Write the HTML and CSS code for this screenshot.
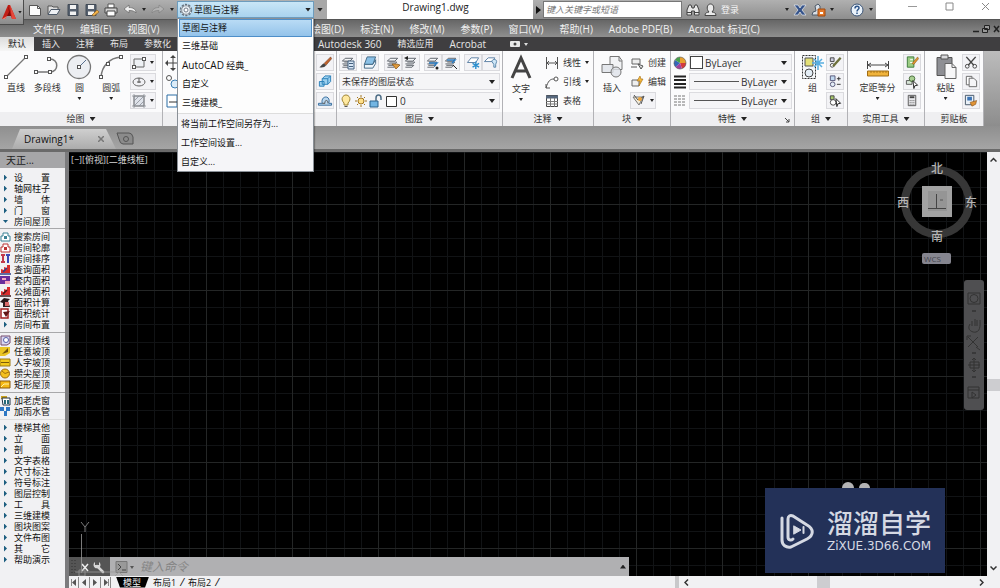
FILE: index.html
```html
<!DOCTYPE html>
<html lang="zh-CN">
<head>
<meta charset="utf-8">
<title>Drawing1.dwg</title>
<link rel="stylesheet" href="styles.css">
</head>
<body>
<svg class="defs" aria-hidden="true">
  <symbol id="minus-square" viewBox="0 0 4 4"><rect x=".5" y=".5" width="3" height="3" fill="#fff" stroke="#555"/></symbol>
  <symbol id="layers" viewBox="0 0 16 16"><path d="M5 3.500h8l-3 3H2zM4 7.500h8l-2 2H2M3 11h8l-2 2H2" fill="#f4f6f8" stroke="#5a5f66"/></symbol>
  <symbol id="undo" viewBox="0 0 14 14"><path d="M1 6l5-4v2.500c4 0 7 1.500 7 5.500-1.500-2-4-2.500-7-2.500V10z" fill="#eee" stroke="#666" stroke-width=".7"/></symbol>
  <symbol id="house" viewBox="0 0 11 11"><path d="M1 10V5h2V2h5v3h2v5z" fill="#fff" stroke="currentColor"/><path d="M4 5h3v3H4z" fill="currentColor"/></symbol>
  <symbol id="chart" viewBox="0 0 11 11"><path d="M1 9V5l3 1V3l3 1V1h3v8z" fill="#d92c2c"/><path d="M0 10h11M3 8l4-4" stroke="currentColor" stroke-width="1.500"/></symbol>
</svg>

<div class="app">
  <header class="titlebar">
    <div class="quick">
      <button class="app-button" aria-label="应用程序">
        <svg width="16" height="16" viewBox="0 0 16 16"><path d="M1 15L7 1h2l6 14h-4l-1-3H6l-2 3z" fill="#c11f17"/><path d="M7 1l3 11H6l2-4z" fill="#7e0c09"/><path d="M9 1l6 14h-4z" fill="#e5483b"/><path d="M1 15l5-3-2 3z" fill="#f37b6d"/></svg>
        <i class="caret"></i>
      </button>
      <button aria-label="新建"><svg width="14" height="14" viewBox="0 0 14 14"><path d="M1.500 2.500h8l3 3v7h-11z" fill="#fbfbfb" stroke="#555"/><path d="M9.500 2.500v3h3" fill="none" stroke="#555"/></svg></button>
      <button aria-label="打开"><svg width="14" height="14" viewBox="0 0 14 14"><path d="M1 11V3h4l1 1h5v2" fill="#ddd" stroke="#555"/><path d="M1 11.500l3-5h9l-3 5z" fill="#eef1f5" stroke="#4d5968"/></svg></button>
      <button aria-label="保存"><svg width="14" height="14" viewBox="0 0 14 14"><path d="M2 1.500h10v11H2z" fill="#56606e" stroke="#414a56"/><path d="M4 2h6v4H4zM4 8.500h6V12H4z" fill="#f2f2f2"/></svg></button>
      <button aria-label="另存为"><svg width="14" height="14" viewBox="0 0 14 14"><path d="M1 1.500h10v11H1z" fill="#56606e" stroke="#414a56"/><path d="M3 2h6v4H3zM3 8.500h6V12H3z" fill="#f2f2f2"/><path d="M7 12l5-5 2 2-5 4z" fill="#f0b14a" stroke="#8b5b1a" stroke-width=".6"/></svg></button>
      <button aria-label="打印"><svg width="14" height="14" viewBox="0 0 14 14"><path d="M4 1h6v4H4z" fill="#fff" stroke="#555"/><path d="M1 5h12v5H1z" fill="#d4d4d4" stroke="#444"/><path d="M3 8h8v5H3z" fill="#fff" stroke="#444"/></svg></button>
      <button aria-label="放弃"><svg width="14" height="14"><use href="#undo"/></svg></button>
      <i class="caret"></i>
      <button class="redo" aria-label="重做"><svg width="14" height="14" viewBox="0 0 14 14"><path d="M13 6L8 2v2.500c-4 0-7 1.500-7 5.500 1.500-2 4-2.500 7-2.500V10z" fill="#bbb" stroke="#777" stroke-width=".7"/></svg></button>
      <i class="caret"></i>
      <div class="workspace">
        <button class="workspace-button" aria-haspopup="listbox" aria-expanded="true">
          <svg width="14" height="14" viewBox="0 0 14 14"><circle cx="7" cy="7" r="5.500" fill="#f8fbfd" stroke="#667380" stroke-width="1.500" stroke-dasharray="2.300 1.150"/><circle cx="7" cy="7" r="4.300" fill="#eef3f7" stroke="#667380" stroke-width=".8"/><circle cx="7" cy="7" r="2" fill="#fff" stroke="#667380" stroke-width=".9"/></svg>
          <span>草图与注释</span><i class="caret big"></i>
        </button>
        <div class="workspace-menu">
          <ul role="listbox" aria-label="工作空间">
            <li role="option" aria-selected="true">草图与注释</li>
            <li role="option">三维基础</li>
            <li role="option"><span class="latin">AutoCAD</span> 经典_</li>
            <li role="option">自定义</li>
            <li role="option">三维建模_</li>
          </ul>
          <ul class="actions">
            <li><button>将当前工作空间另存为...</button></li>
            <li><button>工作空间设置...</button></li>
            <li><button>自定义...</button></li>
          </ul>
        </div>
      </div>
      <button class="quick-more" aria-label="自定义快速访问工具栏"><i class="caret big"></i></button>
    </div>
    <h1>Drawing1.dwg</h1>
    <div class="info">
      <button class="expand" aria-label="折叠"><svg width="5" height="8" viewBox="0 0 5 8"><path d="M0 0l5 4-5 4z" fill="#111"/></svg></button>
      <input type="search" aria-label="搜索" placeholder="键入关键字或短语">
      <button aria-label="查找"><svg width="14" height="14" viewBox="0 0 14 14"><path d="M1 12V7l2-5h2l1 3h2l1-3h2l2 5v5H8.500V8h-3v4z" fill="#e8e8e8" stroke="#444"/><path d="M1 9.500h4.500M8.500 9.500H13" stroke="#444"/></svg></button>
      <button class="login"><svg width="13" height="14" viewBox="0 0 13 14"><path d="M1 12.500c0-3 2-3 4-3.500-3-3-2-8 1.500-8s4.500 5 1.500 8c2 .5 4 .5 4 3.500z" fill="#e9e9e9" stroke="#444"/></svg>登录</button>
      <i class="caret"></i>
      <button aria-label="Exchange"><svg width="14" height="14" viewBox="0 0 14 14"><path d="M1 2h4l2 3 2-3h4l-4 5 4 5H9L7 9l-2 3H1l4-5z" fill="#35538a" stroke="#e6ebf2" stroke-width=".7"/></svg></button>
      <button aria-label="A360"><svg width="15" height="14" viewBox="0 0 15 14"><path d="M1 12l1-3 3-1-1-5 3-2 2 2v9z" fill="#d9dfe6" stroke="#4f5b6a"/><path d="M7 6h7v7H7z" fill="#e5792a" stroke="#9e4a10"/><path d="M9 9h3v2H9z" fill="#fff"/></svg></button>
      <i class="caret"></i>
      <button class="help" aria-label="帮助"><svg width="14" height="14" viewBox="0 0 14 14"><circle cx="7" cy="7" r="6" fill="#eaf2fa" stroke="#3b5578"/><path d="M5 5.500c0-3 4-3 4-.5 0 1.500-2 1.500-2 3.500M7 9.500v1.500" fill="none" stroke="#2d5488" stroke-width="1.500"/></svg></button>
      <i class="caret"></i>
    </div>
    <div class="window-buttons">
      <button aria-label="最小化"><svg width="9" height="9" viewBox="0 0 9 9"><path d="M0 4.500h9" stroke="#999"/></svg></button>
      <button aria-label="最大化"><svg width="9" height="9" viewBox="0 0 9 9"><path d="M1 1h7v7H1z" fill="none" stroke="#888"/></svg></button>
      <button aria-label="关闭"><svg width="9" height="9" viewBox="0 0 9 9"><path d="M1 1l7 7M8 1L1 8" stroke="#888"/></svg></button>
    </div>
  </header>

  <nav class="menubar">
    <div class="menu-group first"><button>文件(F)</button><button>编辑(E)</button><button>视图(V)</button></div>
    <div class="menu-group"><button>绘图(D)</button><button>标注(N)</button><button>修改(M)</button><button>参数(P)</button><button>窗口(W)</button><button>帮助(H)</button><button>Adobe PDF(B)</button><button>Acrobat 标记(C)</button></div>
    <span class="doc-buttons">
      <svg width="28" height="10" viewBox="0 0 28 10"><path d="M1 7.500h6" stroke="#222" stroke-width="1.500"/><path d="M12.500 1.500h5v4h-5zM10.500 4.500h5v4h-5z" fill="#999" stroke="#222"/><path d="M22 2l5 6M27 2l-5 6" stroke="#222" stroke-width="1.500"/></svg>
    </span>
  </nav>

  <nav class="tabs">
    <div class="tab-group first">
      <button class="active">默认</button><button>插入</button><button>注释</button><button>布局</button><button>参数化</button>
    </div>
    <div class="tab-group">
      <button class="latin">Autodesk 360</button><button>精选应用</button><button class="latin">Acrobat</button>
      <button class="collapse" aria-label="最小化功能区"><svg width="18" height="7" viewBox="0 0 18 7"><rect width="10" height="6" rx="1" fill="#e8e8e8"/><circle cx="5" cy="3" r="1.500" fill="#444"/><path d="M14 2h4l-2 3z" fill="#ddd"/></svg></button>
    </div>
  </nav>

  <main class="ribbon">
    <section class="panel">
      <div class="body draw">
        <button class="tool"><svg width="24" height="26" viewBox="0 0 24 26"><path d="M2 23L22 3" stroke="#777" stroke-width="1.300"/><use href="#minus-square" x="0" y="21" width="4" height="4"/><use href="#minus-square" x="20" y="1" width="4" height="4"/></svg>直线</button>
        <button class="tool"><svg width="26" height="26" viewBox="0 0 26 26"><path d="M2 18h14c9 0 9-13 0-13" fill="none" stroke="#777" stroke-width="1.500"/><use href="#minus-square" x="0" y="16" width="4" height="4"/><use href="#minus-square" x="14" y="16" width="4" height="4"/><use href="#minus-square" x="13" y="3" width="4" height="4"/></svg>多段线</button>
        <button class="tool"><svg width="26" height="26" viewBox="0 0 26 26"><circle cx="13" cy="13" r="11.500" fill="#eceef2" stroke="#777" stroke-width="1.300"/><path d="M13 13l7-7" stroke="#58708f"/><use href="#minus-square" x="11" y="11" width="4" height="4"/></svg>圆<i class="caret"></i></button>
        <button class="tool"><svg width="26" height="26" viewBox="0 0 26 26"><path d="M3 23C4 12 11 4 23 3" fill="none" stroke="#777" stroke-width="1.500"/><use href="#minus-square" x="1" y="21" width="4" height="4"/><use href="#minus-square" x="8" y="8" width="4" height="4"/><use href="#minus-square" x="21" y="1" width="4" height="4"/></svg>圆弧<i class="caret"></i></button>
        <div class="stack">
          <button class="split" aria-label="矩形"><svg width="16" height="16" viewBox="0 0 16 16"><path d="M3 4h10v8H3z" fill="#eef1f5" stroke="#666"/><use href="#minus-square" x="1" y="10" width="4" height="4"/><use href="#minus-square" x="11" y="2" width="4" height="4"/></svg><i class="caret"></i></button>
          <button class="split" aria-label="椭圆"><svg width="16" height="16" viewBox="0 0 16 16"><ellipse cx="8" cy="8" rx="6" ry="4" fill="#f0f0f4" stroke="#666"/><path d="M8 4v5M6 8h4" stroke="#555"/></svg><i class="caret"></i></button>
          <button class="split" aria-label="图案填充"><svg width="16" height="16" viewBox="0 0 16 16"><path d="M3 3h10v10H3z" fill="#dfe3ea" stroke="#777"/><path d="M3 8l5-5M3 13L13 3M8 13l5-5M1 3h14M3 1v14M13 1v14M1 13h14" stroke="#8a8f98" stroke-width=".8"/></svg><i class="caret"></i></button>
        </div>
      </div>
      <h2>绘图 <i class="caret big"></i></h2>
    </section>
    <section class="panel">
      <div class="body modify">
        <div class="stack">
          <button class="bare" aria-label="移动"><svg width="16" height="16" viewBox="0 0 16 16"><path d="M8 2v12M2 8h12" stroke="#444"/><path d="M8 0l3 3H5zM8 16l3-3H5zM0 8l3-3v6zM16 8l-3-3v6z" fill="#444"/></svg></button>
          <button class="bare" aria-label="复制"><svg width="16" height="16" viewBox="0 0 16 16"><circle cx="4" cy="4" r="2.500" fill="#fff" stroke="#555"/><circle cx="10" cy="10" r="4" fill="#dcecf8" stroke="#3a7fb5"/></svg></button>
          <button class="bare" aria-label="拉伸"><svg width="16" height="16" viewBox="0 0 16 16"><path d="M2 2h10v12H2z" fill="#fff" stroke="#2a6ca5"/><path d="M4 9h8" stroke="#333"/></svg></button>
        </div>
        <div class="stack">
          <button class="small" aria-label="删除"><svg width="16" height="16" viewBox="0 0 16 16"><path d="M14 2L7 9l2 2 6-7z" fill="#c2622c" stroke="#6b3415" stroke-width=".6"/><path d="M7 9c-2 0-3 3-5 4 3 1 6 0 7-2z" fill="#444"/></svg></button>
          <button class="small" aria-label="分解"><svg width="16" height="16" viewBox="0 0 16 16"><path d="M5 5l3-3h6v6l-3 3H5zM5 5h6v6M11 5l3-3M2 8h5v5H2z" fill="#9cd0ef" stroke="#2a7fb8"/></svg></button>
          <button class="small" aria-label="偏移"><svg width="16" height="16" viewBox="0 0 16 16"><path d="M1 13h14v-2h-3c3-9-9-9-7 0H1z" fill="#b9d6ee" stroke="#336b9c"/><path d="M5 11h3c-1-4 4-4 3 0" fill="none" stroke="#555"/></svg></button>
        </div>
      </div>
      <h2></h2>
    </section>
    <section class="panel">
      <div class="body stack wide">
        <div class="row spread">
          <button class="small" aria-label="图层特性"><svg width="16" height="16"><use href="#layers"/><path d="M8 6h6v8H8z" fill="#d7e6f5" stroke="#45617f"/><path d="M9 8.500h4M9 11.500h4" stroke="#45617f"/></svg></button>
          <button class="small" aria-label="置为当前"><svg width="16" height="16" viewBox="0 0 16 16"><path d="M5 2h9l-3 8H2z" fill="#8ac0e6" stroke="#3f6684"/><path d="M2 10h9l3-5v4l-3 5H2z" fill="#eef4fa" stroke="#3f6684"/></svg></button>
          <span class="pair"><button class="small" aria-label="匹配图层"><svg width="16" height="16"><use href="#layers"/><path d="M7 9l4 5 4-4-3-1z" fill="#e09a3c" stroke="#7d4d16" stroke-width=".7"/></svg></button><button class="small" aria-label="上一个"><svg width="16" height="16"><use href="#layers"/><path d="M1 3l4-2v4z" fill="#222"/></svg></button></span>
          <span class="pair"><button class="small" aria-label="隔离"><svg width="16" height="16"><use href="#layers"/><path d="M4 8h8l-3 3" stroke="#2c7cc1" fill="none" stroke-width="1.500"/><circle cx="12" cy="13" r="1.500" fill="#222"/></svg></button><button class="small" aria-label="取消隔离"><svg width="16" height="16"><use href="#layers"/><path d="M4 5h8l-3 3" stroke="#2c7cc1" fill="none" stroke-width="1.500"/><path d="M10 10l4 4" stroke="#222"/></svg></button></span>
          <span class="pair"><button class="small" aria-label="冻结"><svg width="16" height="16" viewBox="0 0 16 16"><path d="M2 8l4-5h8l-3 5z" fill="#fff" stroke="#5b7fa3"/><path d="M11 7v8M7.500 9l7 4M14.500 9l-7 4" stroke="#2c8fce" stroke-width="1.500"/></svg></button><button class="small" aria-label="关闭图层"><svg width="16" height="16" viewBox="0 0 16 16"><path d="M1 7l4-4h7l-2 4z" fill="#fff" stroke="#5b7fa3"/><path d="M9 7c0-3 5-3 5 0l-1 3v3h-2v-3z" fill="#cfe7f8" stroke="#5482a8"/></svg></button></span>
        </div>
        <div class="field"><select aria-label="图层状态"><option>未保存的图层状态</option></select></div>
        <div class="field">
          <svg width="58" height="14" viewBox="0 0 58 14"><path d="M4 9C0 5 3 1 6 1s6 4 2 8v2H4z" fill="#ffe9a0" stroke="#9f8434"/><path d="M4.500 12.500h3" stroke="#555"/><circle cx="21" cy="7" r="3" fill="#ffe08a" stroke="#a3761f"/><path d="M21 1v2M21 11v2M15 7h2M25 7h2M17 3l1 1M24 10l1 1M25 3l-1 1M18 10l-1 1" stroke="#a3761f"/><path d="M30 7h8v6h-8z" fill="#73b5e2" stroke="#2c628c"/><path d="M36 7V4c0-4 5-4 5 0v2" fill="none" stroke="#4e6d86" stroke-width="1.500"/><path d="M46.500 2.500h10v10h-10z" fill="#fff" stroke="#333"/></svg>
          <select class="latin" aria-label="图层"><option>0</option></select>
        </div>
      </div>
      <h2>图层 <i class="caret big"></i></h2>
    </section>
    <section class="panel">
      <div class="body note">
        <button class="tool"><svg width="24" height="27" viewBox="0 0 24 27"><path d="M3 24L12 4l9 20M6 17h12" fill="none" stroke="#444" stroke-width="3"/></svg>文字<i class="caret"></i></button>
        <div class="stack">
          <button class="line"><svg width="14" height="14" viewBox="0 0 14 14"><path d="M1.500 1v12M12.500 1v12M2 7h10M4 5L2 7l2 2M10 5l2 2-2 2" fill="none" stroke="#555"/></svg>线性<i class="caret"></i></button>
          <button class="line"><svg width="14" height="14" viewBox="0 0 14 14"><path d="M1 13C3 6 5 4 9 4M1 9v4h4" fill="none" stroke="#555"/><circle cx="11" cy="4" r="2" fill="#fff" stroke="#555"/></svg>引线<i class="caret"></i></button>
          <button class="line"><svg width="14" height="14" viewBox="0 0 14 14"><path d="M1.500 1.500h11v11h-11z" fill="#fff" stroke="#444"/><path d="M1 3h12" stroke="#56677c" stroke-width="3"/><path d="M1 7.500h12M1 10h12M5.500 4v9M9.500 4v9" stroke="#777"/></svg>表格</button>
        </div>
      </div>
      <h2>注释 <i class="caret big"></i></h2>
    </section>
    <section class="panel">
      <div class="body note">
        <button class="tool"><svg width="24" height="26" viewBox="0 0 24 26"><path d="M10 2.500h9l3 4v9H10z" fill="#f2f3f5" stroke="#777"/><path d="M2 10.500h11v8H2z" fill="#e4e7ec" stroke="#777"/><circle cx="16" cy="18" r="5" fill="#dfe2e8" fill-opacity=".8" stroke="#777"/><path d="M19 2v5h3" stroke="#777" fill="none"/></svg>插入</button>
        <div class="stack">
          <button class="line"><svg width="14" height="14" viewBox="0 0 14 14"><path d="M2 3h8v5H2z" fill="#eee" stroke="#666"/><path d="M1 11h6M8 8l5 2-2 3z" fill="#ddd" stroke="#555"/></svg>创建</button>
          <button class="line"><svg width="14" height="14" viewBox="0 0 14 14"><path d="M2 5h7v6H2z" fill="#eee" stroke="#666"/><path d="M10 1L7 6h3l-1 5 4-7h-2z" fill="#f5b83d" stroke="#a36d10" stroke-width=".6"/></svg>编辑</button>
          <button class="split" aria-label="编辑属性"><svg width="16" height="16" viewBox="0 0 16 16"><path d="M2 4h10l-4 8z" fill="#f4ecd8" stroke="#777"/><path d="M3 2l4 5 6-4-3 8" fill="none" stroke="#555"/><circle cx="9" cy="6" r="2" fill="#e9a23b"/></svg><i class="caret"></i></button>
        </div>
      </div>
      <h2>块 <i class="caret big"></i></h2>
    </section>
    <section class="panel">
      <div class="body stack wide props">
        <div class="row"><svg width="14" height="14" viewBox="0 0 14 14"><path d="M7 7V1a6 6 0 0 1 6 6z" fill="#e7a02f"/><path d="M7 7h6a6 6 0 0 1-4 5.600z" fill="#d33b3b"/><path d="M7 7l2 5.600A6 6 0 0 1 2.500 11z" fill="#a33f9c"/><path d="M7 7l-4.500 4A6 6 0 0 1 2 4z" fill="#3566b8"/><path d="M7 7L2 4a6 6 0 0 1 5-3z" fill="#48a04c"/><circle cx="7" cy="7" r="6" fill="none" stroke="#555" stroke-width=".6"/></svg>
          <div class="field"><i class="swatch"></i><select class="latin" aria-label="颜色"><option>ByLayer</option></select></div></div>
        <div class="row"><svg width="14" height="14" viewBox="0 0 14 14"><path d="M1 1.500h12M1 5h12M1 9h12M1 12.500h12" stroke="#222" stroke-width="2"/></svg>
          <div class="field"><i class="rule"></i><select class="latin end" aria-label="线宽"><option>ByLayer</option></select></div></div>
        <div class="row"><svg width="14" height="14" viewBox="0 0 14 14"><path d="M1 2h12M1 5h12M1 8h12M1 11h12" stroke="#777" stroke-dasharray="3 1"/></svg>
          <div class="field"><i class="rule"></i><select class="latin end" aria-label="线型"><option>ByLayer</option></select></div></div>
      </div>
      <h2>特性 <i class="caret big"></i><svg class="launcher" width="5" height="5" viewBox="0 0 5 5"><path d="M0 0l4 4M4 1v3H1" fill="none" stroke="#444"/></svg></h2>
    </section>
    <section class="panel">
      <div class="body pairup">
        <button class="tool"><svg width="24" height="26" viewBox="0 0 24 26"><path d="M1.500 1.500h13v23h-13z" fill="#f5f7f9" stroke="#333" stroke-dasharray="2 1"/><path d="M4 4h8v8H4z" fill="#e3e077" stroke="#555"/><circle cx="8" cy="19" r="4" fill="#e4eef6" stroke="#444"/><path d="M17 2v14M11 9h12M13 5l8 8M21 5l-8 8" stroke="#58aee0" stroke-width="1.500"/></svg>组</button>
        <div class="stack">
          <button class="small" aria-label="解除编组"><svg width="16" height="16" viewBox="0 0 16 16"><path d="M3 3h4v4H3z" fill="#ccd" stroke="#444"/><circle cx="5" cy="11" r="2" fill="#fff" stroke="#444"/><path d="M6 12l8-9" stroke="#6d713c" stroke-width="2.500"/></svg></button>
          <button class="small" aria-label="组编辑"><svg width="16" height="16" viewBox="0 0 16 16"><path d="M3 2h5v5H3z" fill="#bfd8ef" stroke="#557"/><circle cx="5.500" cy="11" r="2.500" fill="#e3edf6" stroke="#557"/><path d="M10 5h4M12 3v4M10 11h4" stroke="#333"/></svg></button>
          <button class="small" aria-label="组选择"><svg width="16" height="16" viewBox="0 0 16 16"><path d="M3 3h4v4H3z" fill="#a6c66b" stroke="#444"/><circle cx="6" cy="10" r="3" fill="#fff" stroke="#444"/><path d="M9 6l5 5-3 .5-1 3z" fill="#fff" stroke="#222"/></svg></button>
        </div>
      </div>
      <h2>组 <i class="caret big"></i></h2>
    </section>
    <section class="panel">
      <div class="body pairup">
        <button class="tool"><svg width="26" height="26" viewBox="0 0 26 26"><path d="M2.500 7v8M23.500 7v8M3 11h20M6 9l-3 2 3 2M20 9l3 2-3 2" fill="none" stroke="#444"/><path d="M2.500 17h21v5h-21z" fill="#f0b33b" stroke="#a06c14"/><path d="M6 17v2M9 17v2M12 17v2M15 17v2M18 17v2M21 17v2" stroke="#a06c14" stroke-width=".8"/></svg>定距等分<i class="caret"></i></button>
        <div class="stack">
          <button class="small" aria-label="快速选择"><svg width="16" height="16" viewBox="0 0 16 16"><path d="M3 2h7v11H3z" fill="#9ccc84" stroke="#3c7a3a"/><path d="M6 5h3M6 8h3" stroke="#fff"/><path d="M8 9l6-7 1 2-5 6z" fill="#e0952e" stroke="#76480f" stroke-width=".5"/></svg></button>
          <button class="small" aria-label="全部选择"><svg width="16" height="16" viewBox="0 0 16 16"><path d="M2 7h6v4H2z" fill="#d8e6d8" stroke="#555"/><circle cx="8" cy="5" r="3" fill="#a8cf91" stroke="#476b3c"/><path d="M9 7l5 5-3 .5-1 3z" fill="#fff" stroke="#222"/></svg></button>
          <button class="small" aria-label="计算器"><svg width="16" height="16" viewBox="0 0 16 16"><path d="M4 2.500h8v11H4z" fill="#e7e7ea" stroke="#555"/><path d="M5.500 4.500h5" stroke="#444" stroke-width="2"/><path d="M5.500 8h5M5.500 10h5M5.500 12h5" stroke="#666" stroke-dasharray="1 1"/></svg></button>
        </div>
      </div>
      <h2>实用工具 <i class="caret big"></i></h2>
    </section>
    <section class="panel">
      <div class="body pairup">
        <button class="tool"><svg width="24" height="26" viewBox="0 0 24 26"><path d="M3 3.500h15v18H3z" fill="#8e8f94" stroke="#555"/><path d="M7 1h7v4H7z" fill="#d9d9dc" stroke="#555"/><path d="M11 9.500h7l4 4v11H11z" fill="#f7f7f8" stroke="#666"/><path d="M18 9.500v4h4" fill="none" stroke="#666"/></svg>粘贴<i class="caret"></i></button>
        <div class="stack">
          <button class="small" aria-label="剪切"><svg width="16" height="16" viewBox="0 0 16 16"><path d="M3 2l8 9M13 2l-8 9" stroke="#444" stroke-width="1.500"/><circle cx="4" cy="12" r="2" fill="none" stroke="#444"/><circle cx="12" cy="12" r="2" fill="none" stroke="#444"/></svg></button>
          <button class="small" aria-label="复制剪裁"><svg width="16" height="16" viewBox="0 0 16 16"><path d="M3 2.500h6v9H3z" fill="#fff" stroke="#666"/><path d="M6 4.500h5l3 3v6H6z" fill="#f5f5f7" stroke="#666"/></svg></button>
          <button class="small" aria-label="特性匹配"><svg width="16" height="16" viewBox="0 0 16 16"><path d="M2 2.500h9v10H2z" fill="#eaf1f8" stroke="#456"/><path d="M4 4h5v4H4z" fill="#3d74b5"/><path d="M7 10l7-2-1 4-4 2z" fill="#e09336" stroke="#804d13" stroke-width=".6"/></svg></button>
        </div>
      </div>
      <h2>剪贴板</h2>
    </section>
  </main>

  <div class="doc-tabs">
    <button class="doc-tab"><span>Drawing1*</span><svg width="6" height="6" viewBox="0 0 6 6"><path d="M0 0l6 6M6 0L0 6" stroke="#777" stroke-width="1.500"/></svg></button>
    <button class="new-tab" aria-label="新图形"><svg width="18" height="13" viewBox="0 0 18 13"><path d="M1 1h12q3 0 4 4v7H7q-3 0-4-5z" fill="#8b8b8b" stroke="#555"/><circle cx="10" cy="7" r="2.500" fill="none" stroke="#555"/></svg></button>
  </div>

  <div class="workarea">
    <aside class="sidebar">
      <h2>天正...</h2>
      <ul>
        <li><i class="arrow"></i><span class="apart"><b>设</b><b>置</b></span></li>
        <li><i class="arrow"></i>轴网柱子</li>
        <li><i class="arrow"></i><span class="apart"><b>墙</b><b>体</b></span></li>
        <li><i class="arrow"></i><span class="apart"><b>门</b><b>窗</b></span></li>
        <li><i class="arrow open"></i>房间屋顶</li>
      </ul>
      <ul class="ruled">
        <li><svg class="teal"><use href="#house"/></svg>搜索房间</li>
        <li><svg class="red"><use href="#house"/></svg>房间轮廓</li>
        <li><svg viewBox="0 0 11 11"><path d="M1 1h4v2H4v5h1v2H1V8h1V3H1z" fill="#c33a4c"/><path d="M6 1h4v2H9v7H7V3H6z" fill="#3b49b5"/></svg>房间排序</li>
        <li><svg class="navy"><use href="#chart"/></svg>查询面积</li>
        <li><svg viewBox="0 0 11 11"><path d="M0 1h10v8H0z" fill="#6a2d9c"/><path d="M2 3h4v2H2zM5 6h5v3H5z" fill="#f7a6c0"/></svg>套内面积</li>
        <li><svg class="dark"><use href="#chart"/></svg>公摊面积</li>
        <li><svg viewBox="0 0 11 11"><path d="M0 5l4-4 6 1-2 2 2 6H3V6z" fill="#2b1a1c"/><path d="M5 5h4v4H5z" fill="#d96a6a"/></svg>面积计算</li>
        <li><svg viewBox="0 0 11 11"><path d="M1 1h7v9H1z" fill="#fff" stroke="#a12020" stroke-width="1.500"/><path d="M3 4l7-1-4 6z" fill="#601616"/></svg>面积统计</li>
        <li><i class="arrow"></i>房间布置</li>
      </ul>
      <ul class="ruled">
        <li><svg viewBox="0 0 11 11"><path d="M1 1h9v7l-3 2H1z" fill="#d9d7f0" stroke="#754a6e"/><circle cx="6" cy="5" r="2.500" fill="#fff" stroke="#5660a8"/></svg>搜屋顶线</li>
        <li><svg viewBox="0 0 11 11"><path d="M0 1h10v6L5 10H0z" fill="#eac424"/><path d="M2 8l6-6v4z" fill="#71500c"/></svg>任意坡顶</li>
        <li><svg viewBox="0 0 11 11"><path d="M0 2h10v7H0z" fill="#f2c81c" stroke="#9d7a12"/><path d="M1 5.500h8" stroke="#7a5a09"/></svg>人字坡顶</li>
        <li><svg viewBox="0 0 11 11"><circle cx="5" cy="5.500" r="4.500" fill="#f4c01e" stroke="#9d6e12"/><path d="M2 3l3 2.500L9 4" stroke="#a3720d" fill="none"/></svg>攒尖屋顶</li>
        <li><svg viewBox="0 0 11 11"><path d="M0 2h10v7H0z" fill="#f5b914" stroke="#8c5a0e"/><path d="M1 8l3-3h5" stroke="#fff2a8" fill="none"/></svg>矩形屋顶</li>
      </ul>
      <ul class="ruled">
        <li><svg viewBox="0 0 11 11"><path d="M1 1h6v3H1z" fill="#caa11e"/><path d="M2 3h8v7H3z" fill="#fff" stroke="#234"/><path d="M4 5h2v4H4zM7 5h2v4H7z" fill="#256a77"/></svg>加老虎窗</li>
        <li><svg viewBox="0 0 11 11"><path d="M0 1h4v4H0zM6 1h4v4H6zM4 5h3v5H4z" fill="#2e78c4"/></svg>加雨水管</li>
      </ul>
      <ul class="ruled light">
        <li><i class="arrow"></i>楼梯其他</li>
        <li><i class="arrow"></i><span class="apart"><b>立</b><b>面</b></span></li>
        <li><i class="arrow"></i><span class="apart"><b>剖</b><b>面</b></span></li>
        <li><i class="arrow"></i>文字表格</li>
        <li><i class="arrow"></i>尺寸标注</li>
        <li><i class="arrow"></i>符号标注</li>
        <li><i class="arrow"></i>图层控制</li>
        <li><i class="arrow"></i><span class="apart"><b>工</b><b>具</b></span></li>
        <li><i class="arrow"></i>三维建模</li>
        <li><i class="arrow"></i>图块图案</li>
        <li><i class="arrow"></i>文件布图</li>
        <li><i class="arrow"></i><span class="apart"><b>其</b><b>它</b></span></li>
        <li><i class="arrow"></i>帮助演示</li>
      </ul>
    </aside>

    <div class="view">
      <div class="canvas">
        <svg class="grid" width="100%" height="100%">
          <defs><pattern id="grid" x="51" y="52" width="86" height="86" patternUnits="userSpaceOnUse">
            <path d="M17.500 0v86M34.500 0v86M52.500 0v86M69.500 0v86M0 17.500h86M0 34.500h86M0 52.500h86M0 69.500h86" stroke="#111315"/>
            <path d="M.5 0v86M0 .5h86" stroke="#242626"/>
          </pattern></defs>
          <rect width="100%" height="100%" fill="url(#grid)"/>
        </svg>
        <span class="view-label">[−][俯视][二维线框]</span>
        <svg class="cube" width="80" height="86" viewBox="0 0 80 86">
          <circle cx="40" cy="43" r="32" fill="none" stroke="#373737" stroke-width="8"/>
          <path d="M25 27h30v31H25z" fill="#a2a2a2"/><path d="M31 32h19v20H31z" fill="#959595"/>
          <path d="M39.500 35v14M31 49.500h18" stroke="#444"/><path d="M43 41h3" stroke="#555"/>
          <text x="40" y="14">北</text><text x="40" y="82">南</text><text x="6" y="48">西</text><text x="74" y="48">东</text>
        </svg>
        <button class="wcs">WCS</button>
        <div class="navbar">
          <svg width="18" height="130" viewBox="0 0 18 130" fill="none" stroke="#333"><path d="M4 13h12v11H4z"/><circle cx="10" cy="18.500" r="4"/><path d="M8 31h4M8 73h4M8 97h4" stroke-width="1.500"/><path d="M6 44c-4 6 3 9 6 8 5-1 4-9 4-12M8 46v-5M11 46v-7M13 46v-6"/><path d="M4 57l10 10M14 57L4 67M12 67l4 3M3 60v-4h4"/><path d="M10 78v14M4 85h12M6 82h9v6H6zM8 80l2-2 2 2M8 90l2 2 2-2"/><path d="M4 107h11v11H4zM4 110h11M8 112l4 3-4 3z"/></svg>
        </div>
        <svg class="ucs" width="60" height="60" viewBox="0 0 60 60"><path d="M10.500 12v39M8 48h6v6H8zM4 50h44M44 46l8 8M52 46l-8 8" fill="none" stroke="#999"/><path d="M10 0l4 5 4-5M14 5v5" fill="none" stroke="#999"/></svg>
        <div class="watermark">
          <svg width="36" height="40" viewBox="0 0 36 40" fill="none" stroke="#d5d9e3" stroke-width="4" stroke-linecap="round" stroke-linejoin="round"><path d="M3 7v22c0 5 4 8 9 7l16-8c7-4 7-10 0-14L14 5c-3-1-5 0-5 3v18c0 3 3 4 5 2" stroke-width="3"/><path d="M15 15l7 4-7 4z" fill="#d5d9e3" stroke-width="1"/><path d="M24.500 16v6" stroke-width="2"/></svg>
          <div><strong>溜溜自学</strong><span>ZiXUE.3D66.COM</span></div>
        </div>
        <div class="command">
          <span class="command-tools"><svg width="38" height="16" viewBox="0 0 38 16"><path d="M3 1v14M6 1v14" stroke="#333" stroke-dasharray="1 2"/><path d="M13 5l6 7M19 5l-6 7" stroke="#eee" stroke-width="1.500"/><path d="M28 7l6 6" stroke="#d8d8d8" stroke-width="2.500" stroke-linecap="round"/><path d="M26 3a3.500 3.500 0 1 0 4 0v3h-4z" fill="#d8d8d8"/></svg></span>
          <svg width="20" height="14" viewBox="0 0 20 14"><path d="M1 1.500h11v11H1z" fill="#999" stroke="#777"/><path d="M3 4l3 3-3 3M7 10h4" fill="none" stroke="#444"/><path d="M15 6h4l-2 3z" fill="#555"/></svg>
          <input type="text" aria-label="命令行" placeholder="键入命令">
          <i class="caret up"></i>
        </div>
      </div>
      <div class="vscroll">
        <svg width="7" height="5" viewBox="0 0 7 5"><path d="M.5 4.500l3-3 3 3" fill="none" stroke="#333" stroke-width="1.500"/></svg>
        <i class="thumb"></i>
        <svg width="7" height="5" viewBox="0 0 7 5"><path d="M.5 .5l3 3 3-3" fill="none" stroke="#333" stroke-width="1.500"/></svg>
      </div>
      <footer class="layouts">
        <div class="layout-tabs">
          <svg width="42" height="11" viewBox="0 0 42 11"><path d="M2.500 2v7M9.500 0v11M20.500 0v11M31.500 0v11M41.500 0v11M39.500 2v7" stroke="#888"/><path d="M7 2v7L3 5.500zM17 2v7l-4-3.500zM24 2v7l4-3.500zM35 2v7l4-3.500z" fill="#555"/></svg>
          <button class="active">模型</button><button>布局1</button><i>/</i><button>布局2</button><i>/</i>
        </div>
        <div class="hscroll">
          <svg width="5" height="7" viewBox="0 0 5 7"><path d="M4 .5l-3 3 3 3" fill="none" stroke="#333" stroke-width="1.500"/></svg>
          <i class="thumb"></i>
          <svg width="5" height="7" viewBox="0 0 5 7"><path d="M1 .5l3 3-3 3" fill="none" stroke="#333" stroke-width="1.500"/></svg>
        </div>
      </footer>
    </div>
  </div>
</div>
</body>
</html>
```

FILE: styles.css
```css
* { box-sizing: border-box; }
body, h1, h2, ul { margin: 0; padding: 0; }
ul { list-style: none; }
body {
  font: 9px/12px "Open Sans", "Noto Sans CJK SC", sans-serif;
  color: #333;
  overflow: hidden;
}
button, input, select {
  font: inherit;
  color: inherit;
  background: none;
  border: 0;
  padding: 0;
  margin: 0;
  white-space: nowrap;
}
svg { display: block; flex: none; }
.defs { position: absolute; width: 0; height: 0; }
.latin { font-size: 10px; }
.caret {
  flex: none;
  width: 4px;
  height: 3px;
  background: #222;
  clip-path: polygon(0 0, 100% 0, 50% 100%);
}
.caret.big { width: 6px; height: 4px; }
.caret.up { width: 6px; height: 4px; clip-path: polygon(50% 0, 100% 100%, 0 100%); }

.app { display: flex; flex-direction: column; height: 100vh; min-height: 588px; background: #555; }

/* Title bar */
.titlebar {
  display: grid;
  grid-template-columns: 327fr 206fr 343fr 124fr;
  height: 19px;
  background: #fff;
}
.quick, .info {
  min-width: 0;
  display: flex;
  align-items: center;
  gap: 5px;
  background: linear-gradient(#b0b0b0, #8e8e8e);
}
.quick { position: relative; padding-left: 28px; }
.redo { opacity: .7; }
.app-button {
  position: absolute;
  z-index: 2;
  left: 0;
  top: 0;
  width: 24px;
  height: 25px;
  display: flex;
  align-items: center;
  gap: 1px;
  padding-left: 1px;
  background: linear-gradient(#c4c4c4, #8b8b8b);
  border: 1px solid #4c4c4c;
  border-width: 0 1px 1px 0;
}
.workspace { position: relative; flex: 1; margin-left: -2px; }
.workspace-button {
  width: 100%;
  height: 17px;
  display: flex;
  align-items: center;
  gap: 1px;
  padding: 0 2px 0 1px;
  background: linear-gradient(#c9e6f7, #a9d3ee);
  border: 1px solid #6d9cbd;
  color: #111;
}
.workspace-button .caret { margin-left: auto; }
.workspace-menu {
  position: absolute;
  z-index: 5;
  top: 17px;
  left: 0;
  right: 0;
  background: #fdfdfd;
  border: 1px solid #8a9097;
  color: #111;
  box-shadow: 1px 1px 1px #0004;
}
.workspace-menu li { height: 19px; padding: 0 4px; line-height: 18px; }
.workspace-menu li:first-child[aria-selected] {
  height: 18px;
  line-height: 16px;
  background: linear-gradient(#b9dbf5, #94c3ea);
  border: 1px solid #4e8fc9;
  margin: 0 1px;
  padding: 0 2px;
}
.workspace-menu .actions { background: #f5f5f8; border-top: 1px solid #ddd; }
.workspace-menu .actions li { padding: 0 3px; line-height: 19px; }
.quick-more { width: 13px; height: 100%; margin-left: -5px; padding-left: 3px; background: #a8a8a8; }
.quick-more .caret { display: block; }
h1 { font-size: 10px; font-weight: 400; line-height: 15px; text-align: center; color: #222; padding-left: 11px; }
.info { gap: 4px; padding-right: 3px; }
.expand { width: 10px; padding-left: 3px; }
.info input {
  width: 139px;
  height: 17px;
  margin: 0 0 0 -4px;
  padding: 0 2px;
  background: #fff;
  border: 1px solid #777;
  font-style: italic;
}
.info input::placeholder { color: #777; }
.login { display: flex; align-items: center; gap: 4px; color: #f4f4f4; margin-right: auto; }
.help { margin: 0 1px 0 12px; }
.window-buttons { display: flex; justify-content: space-between; align-items: flex-start; padding: 2px 10px 0 32px; }

/* Menu bar */
.menubar {
  display: flex;
  align-items: center;
  height: 18px;
  font-size: 10px;
  color: #f0f0f0;
  background: linear-gradient(#666, #8f8f8f);
  border-top: 1px solid #555;
}
.menu-group { display: flex; gap: 16px; }
.menu-group.first { flex: 0 0 311px; padding-left: 33px; }
.doc-buttons { margin-left: auto; }

/* Ribbon tabs */
.tabs { display: flex; height: 14px; background: #3f3e40; color: #e6e6e6; }
.tab-group { display: flex; }
.tab-group.first { flex: 0 0 310px; }
.tabs button { padding: 0 8px; }
.tabs .collapse { padding-left: 16px; }
.tabs .active { background: linear-gradient(#dcdcdc, #f6f6f6); color: #222; }

/* Ribbon */
.ribbon {
  display: grid;
  grid-template-columns: 163fr 174fr 166fr 91fr 77fr 124fr 53fr 77fr 59fr;
  height: 75px;
  padding-right: 16px;
  background: linear-gradient(#bcbcbc, #8d8d8d);
}
.panel {
  min-width: 0;
  display: flex;
  flex-direction: column;
  background: #fbfbfc;
  border-right: 1px solid #b2b2b6;
}
.panel h2 {
  position: relative;
  display: flex;
  justify-content: center;
  align-items: center;
  gap: 5px;
  height: 14px;
  font-size: 9px;
  font-weight: 400;
  background: #efeff1;
}
.launcher { position: absolute; right: 4px; top: 6px; }
.body { flex: 1; min-width: 0; display: flex; align-items: flex-start; padding: 3px 2px 0; }
.draw { justify-content: space-between; padding: 3px 6px 0 4px; }
.note { justify-content: space-between; padding: 3px 4px 0 6px; }
.modify { justify-content: space-between; }
.pairup { justify-content: space-between; padding: 3px 3px 0 4px; }
.pairup .tool { flex: 1; }
.tool { display: flex; flex-direction: column; align-items: center; gap: 2px; }
.tool .caret { margin-top: 1px; }
.stack { display: flex; flex-direction: column; gap: 2px; }
.stack.wide { align-items: stretch; }
.small { width: 18px; height: 17px; border: 1px solid #dadade; background: #f3f3f6; }
.small svg { margin: 0 auto; height: 15px; }
.bare { width: 18px; height: 17px; }
.split {
  display: flex;
  align-items: center;
  gap: 3px;
  height: 17px;
  width: 26px;
  padding: 0 2px 0 0;
  border: 1px solid #dadade;
  background: #f3f3f6;
}
.line { display: flex; align-items: center; gap: 4px; height: 17px; }
.row { display: flex; align-items: center; gap: 2px; }
.spread { justify-content: space-between; }
.pair { display: flex; }
.field {
  flex: 1;
  min-width: 0;
  position: relative;
  display: flex;
  align-items: center;
  height: 17px;
  background: #f5f5f7;
  border: 1px solid #dcdce0;
}
.wide > .field { flex: none; }
.field select { appearance: none; flex: 1; min-width: 0; padding: 0 14px 0 2px; height: 15px; }
.field::after {
  content: "";
  position: absolute;
  right: 4px;
  top: 6px;
  width: 6px;
  height: 4px;
  background: #222;
  clip-path: polygon(0 0, 100% 0, 50% 100%);
}
.field .end { flex: none; width: 52px; }
.props { padding-right: 2px; }
.swatch { width: 13px; height: 13px; border: 1px solid #444; background: #fff; }
.rule { flex: 1; height: 1px; margin-left: 4px; background: #555; }

/* Document tabs */
.doc-tabs {
  display: flex;
  align-items: flex-end;
  height: 26px;
  padding-left: 12px;
  background: linear-gradient(#8f8f8f, #a5a5a5);
  border-bottom: 3px solid #6a6a6a;
}
.doc-tab {
  display: flex;
  align-items: center;
  gap: 24px;
  height: 20px;
  padding: 0 12px 0 12px;
  font-size: 10px;
  color: #111;
  background: linear-gradient(#cfcfcf, #acacac);
  clip-path: polygon(8px 0, calc(100% - 10px) 0, 100% 100%, 0 100%);
}
.new-tab { padding-bottom: 4px; }

/* Work area */
.workarea { flex: 1; min-height: 0; display: grid; grid-template-columns: 65px 1fr; gap: 4px; background: #7b7b7d; }
.sidebar { background: #f1f1f3; color: #111; }
.sidebar h2 { height: 16px; padding-left: 6px; font-size: 10px; font-weight: 400; line-height: 17px; background: #a6a6a8; color: #222; }
.sidebar ul { padding: 4px 0 1px; }
.sidebar .ruled { padding: 2px 0 2px; border-top: 1px solid #a8a8aa; }
.sidebar .light { border-color: #ddd; }
.sidebar li { display: flex; align-items: center; height: 11px; line-height: 11px; }
.sidebar li svg { width: 11px; height: 11px; margin-right: 3px; }
.arrow { width: 3px; height: 6px; margin: 0 7px 0 4px; background: #1b5d7f; clip-path: polygon(0 0, 100% 50%, 0 100%); }
.arrow.open { width: 5px; height: 3px; margin: 0 6px 0 3px; clip-path: polygon(0 0, 100% 0, 50% 100%); }
.apart { display: flex; justify-content: space-between; width: 36px; }
.apart b { font-weight: 400; }
.teal { color: #3b8295; }
.red { color: #bb3434; }
.navy { color: #30408c; }
.dark { color: #3c1a1a; }

.view { min-width: 0; display: grid; grid-template-columns: 1fr 13px; grid-template-rows: 1fr 12px; }
.canvas { position: relative; min-width: 0; overflow: hidden; background: #000; }
.grid { position: absolute; inset: 0; }
.view-label { position: absolute; left: 2px; top: 2px; color: #d5d5d5; }
.cube { position: absolute; right: 10px; top: 7px; }
.cube text { font-size: 12px; font-weight: 500; fill: #b4b4b4; text-anchor: middle; }
.wcs {
  position: absolute;
  right: 36px;
  top: 101px;
  width: 29px;
  height: 11px;
  padding-left: 2px;
  border-radius: 2px;
  background: #85858f;
  color: #44444c;
  font-size: 8px;
  line-height: 10px;
  text-align: left;
}
.navbar { position: absolute; right: 3px; top: 128px; width: 20px; border-radius: 3px; background: #4f4f51; }
.ucs { position: absolute; left: 2px; bottom: -6px; z-index: 2; opacity: .8; }
.watermark {
  position: absolute;
  right: 42px;
  bottom: 3px;
  width: 180px;
  height: 85px;
  display: flex;
  align-items: center;
  gap: 12px;
  padding-left: 14px;
  background: #233158;
  color: #d5d9e3;
}
.watermark::before, .watermark::after {
  content: "";
  position: absolute;
  top: -6px;
  left: 77px;
  width: 12px;
  height: 6px;
  border-radius: 6px 6px 0 0;
  background: #b4b4b4;
}
.watermark::after { left: 94px; top: -5px; height: 5px; width: 11px; }
.watermark strong { display: block; font-size: 26px; line-height: 34px; font-weight: 500; }
.watermark span { display: block; padding-bottom: 4px; font: 12px/12px "DejaVu Sans", sans-serif; }
.command {
  position: absolute;
  left: 0;
  bottom: 0;
  width: 61%;
  height: 19px;
  display: flex;
  align-items: center;
  gap: 5px;
  padding-right: 3px;
  background: #b0b0b2;
}
.command-tools { display: flex; align-items: center; width: 41px; height: 100%; background: #555; }
.command input { flex: 1; font-size: 12px; font-style: italic; }
.command input::placeholder { color: #858585; }

.vscroll { display: flex; flex-direction: column; align-items: center; justify-content: space-between; padding: 5px 0; background: #f1f1f3; }
.vscroll .thumb { width: 100%; height: 12px; margin-top: 42px; background: #cdcdd0; }
.layouts { grid-column: 1 / -1; display: grid; grid-template-columns: 610fr 321fr; background: #f1f1f3; }
.layout-tabs { display: flex; align-items: center; border-right: 4px solid #c8c8ca; color: #111; }
.layout-tabs button { line-height: 11px; padding: 0 4px; }
.layout-tabs .active { padding: 0 8px 0 11px; background: #000; color: #eee; clip-path: polygon(4px 0, 100% 0, calc(100% - 4px) 100%, 8px 100%); margin-left: 1px; }
.layout-tabs i { font-size: 11px; }
.hscroll { display: flex; align-items: center; justify-content: space-between; padding: 0 16px 0 5px; }
.hscroll .thumb { width: 13px; height: 100%; margin-right: 22px; background: #cdcdd0; }
```
